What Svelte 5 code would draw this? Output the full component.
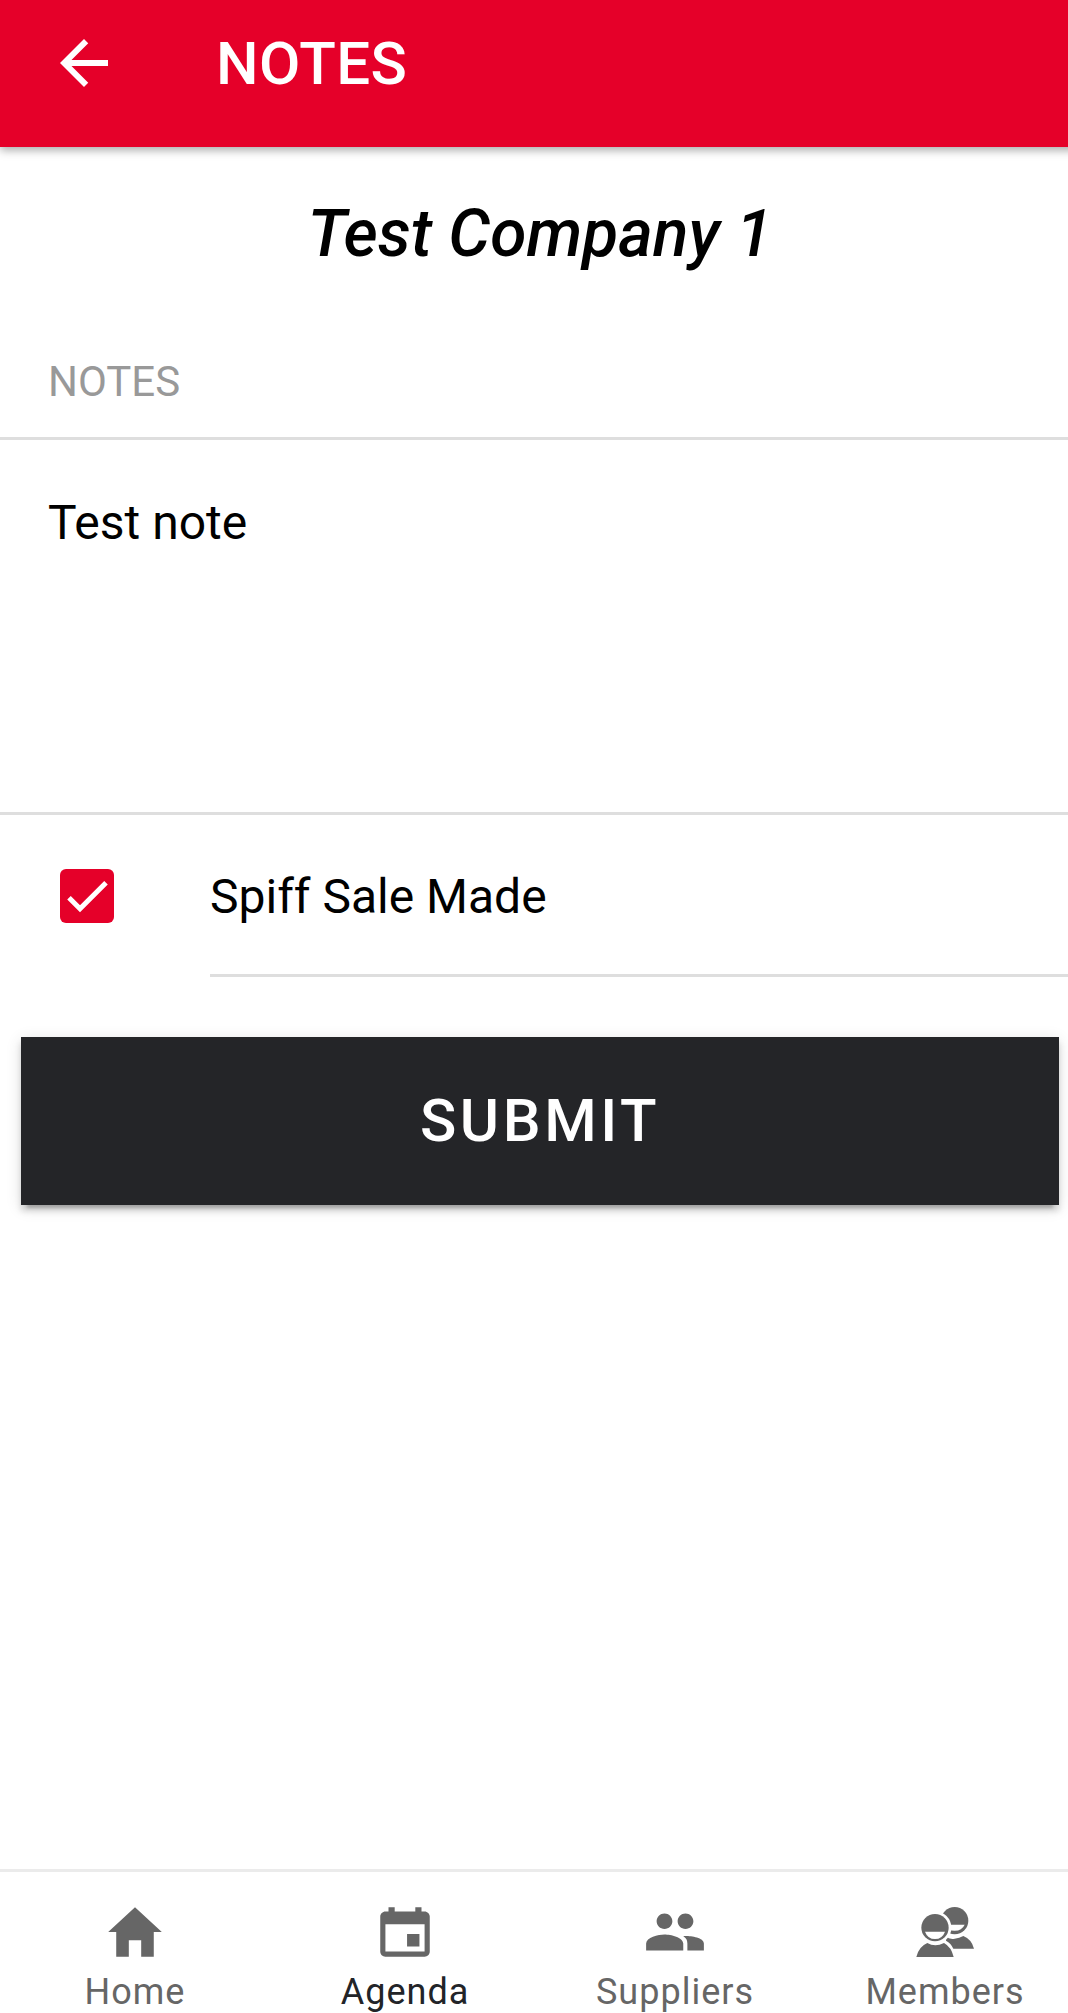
<script lang="ts">
	type Tab = { name: string; icon: string };

	const tabs: Tab[] = [
		{ name: 'Home', icon: 'home' },
		{ name: 'Agenda', icon: 'calendar' },
		{ name: 'Suppliers', icon: 'people' },
		{ name: 'Members', icon: 'members' }
	];

	const paths: Record<string, string> = {
		home: 'M208 448V320h96v128h97.6V256H464L256 64 48 256h62.4v192z',
		calendar:
			'M368 272h-96v96h96v-96zM336 64v32H176V64h-48v32h-24c-22 0-40 18-40 40v272c0 22 18 40 40 40h304c22 0 40-18 40-40V136c0-22-18-40-40-40h-24V64h-48zm72 344H104V196h304v212z',
		people:
			'M337.454 232c33.599 0 61.092-27.002 61.092-60 0-32.997-27.493-60-61.092-60s-61.09 27.003-61.09 60c0 32.998 27.491 60 61.09 60zm-162.908 0c33.599 0 61.09-27.002 61.09-60 0-32.997-27.491-60-61.09-60s-61.092 27.003-61.092 60c0 32.998 27.493 60 61.092 60zm0 44C126.688 276 32 298.998 32 346v54h288v-54c0-47.002-97.599-70-145.454-70zm162.908 11.003c-6.105 0-10.325 0-17.454.997 23.426 17.002 32 28 32 58v54h128v-54c0-47.002-94.688-58.997-142.546-58.997z'
	};

	let active = $state('Agenda');
	let note = $state('Test note');
	let spiffSale = $state(true);
</script>

<div class="page">
	<header>
		<button class="back" aria-label="Back">
			<svg viewBox="0 0 24 24" width="72" height="72">
				<path d="M20 11H7.83l5.59-5.59L12 4l-8 8 8 8 1.41-1.41L7.83 13H20v-2z" fill="#fff" />
			</svg>
		</button>
		<h1>NOTES</h1>
	</header>

	<main>
		<h2>Test Company 1</h2>
		<div class="list-header">NOTES</div>
		<textarea bind:value={note} aria-label="Notes" spellcheck="false"></textarea>

		<div class="item">
			<button
				class="checkbox"
				class:checked={spiffSale}
				role="checkbox"
				aria-checked={spiffSale}
				aria-label="Spiff Sale Made"
				onclick={() => (spiffSale = !spiffSale)}
			>
				{#if spiffSale}
					<svg viewBox="0 0 54 54" width="54" height="54">
						<path d="M9 28.8l11 11L46 13.8" fill="none" stroke="#fff" stroke-width="5" />
					</svg>
				{/if}
			</button>
			<div class="item-label">Spiff Sale Made</div>
		</div>

		<button class="submit">SUBMIT</button>
	</main>

	<nav>
		{#each tabs as tab (tab.name)}
			<button class="tab" class:active={active === tab.name} onclick={() => (active = tab.name)}>
				{#if tab.icon === 'members'}
					<svg viewBox="0 0 198 198" width="66" height="66">
						<circle cx="128" cy="65" r="41" />
						<path class="cut" d="M98 77h60q-8 18-30 18T98 77z" />
						<path d="M102 112q10 10 26 7 14-1 26-8 25 10 32 38h-62q-7-16-22-24z" />
						<circle class="cut" cx="69" cy="86" r="49" />
						<circle cx="69" cy="86" r="41" />
						<path class="cut" d="M39 98h60q-8 22-30 22T39 98z" />
						<path d="M46 132q23 14 50 0 22 12 29 42H13q7-31 33-42z" />
					</svg>
				{:else}
					<svg viewBox="0 0 512 512" width="66" height="66">
						<path d={paths[tab.icon]} />
					</svg>
				{/if}
				<span>{tab.name}</span>
			</button>
		{/each}
	</nav>
</div>

<style>
	:global(body) {
		background: #fff;
		margin: 0;
		overflow: hidden;
	}

	.page {
		color: #000;
		display: flex;
		flex-direction: column;
		font-family: Roboto, sans-serif;
		height: 2013px;
		overflow: hidden;
		width: 1080px;
	}

	button {
		background: none;
		border: none;
		border-radius: 0;
		font-family: inherit;
		margin: 0;
		padding: 0;
	}

	svg {
		display: block;
	}

	header {
		background: #e50029;
		box-sizing: border-box;
		box-shadow: 0 3px 9px rgba(0, 0, 0, 0.35);
		display: flex;
		flex: none;
		gap: 96px;
		height: 147px;
		padding: 27px 48px 0;
	}

	.back {
		height: 72px;
	}

	h1 {
		color: #fff;
		font-size: 60px;
		font-weight: 500;
		letter-spacing: 0.4px;
		line-height: 74px;
		margin: 0;
	}

	main {
		display: flex;
		flex: 1;
		flex-direction: column;
	}

	h2 {
		font-size: 66px;
		font-style: italic;
		font-weight: 500;
		line-height: 80px;
		margin: 47px 0 0;
		text-align: center;
	}

	.list-header {
		border-bottom: 3px solid #dedede;
		color: #999;
		font-size: 42px;
		line-height: 50px;
		margin-top: 83px;
		padding: 0 48px 30px;
	}

	textarea {
		background: none;
		border: none;
		border-bottom: 3px solid #dedede;
		border-radius: 0;
		box-sizing: border-box;
		color: #000;
		font: 48px/57px Roboto, sans-serif;
		height: 375px;
		outline: none;
		padding: 54px 48px 0;
		resize: none;
		width: 100%;
	}

	.item {
		align-items: center;
		display: flex;
		height: 162px;
		padding-left: 60px;
	}

	.checkbox {
		border: 6px solid #999;
		border-radius: 6px;
		box-sizing: border-box;
		height: 54px;
		width: 54px;
	}

	.checkbox.checked {
		background: #e50029;
		border: none;
	}

	.item-label {
		border-bottom: 3px solid #dedede;
		box-sizing: border-box;
		flex: 1;
		font-size: 48px;
		height: 162px;
		line-height: 164px;
		margin-left: 96px;
	}

	.submit {
		background: #242528;
		box-shadow:
			0 9px 3px -6px rgba(0, 0, 0, 0.2),
			0 6px 6px 0 rgba(0, 0, 0, 0.14),
			0 3px 15px 0 rgba(0, 0, 0, 0.12);
		color: #fff;
		font-size: 60px;
		font-weight: 500;
		height: 168px;
		letter-spacing: 3.6px;
		margin: 60px 21px 0;
		padding-bottom: 2px;
	}

	nav {
		border-top: 3px solid #ebebeb;
		box-sizing: border-box;
		display: flex;
		flex: none;
		height: 144px;
	}

	.tab {
		align-items: center;
		color: #666;
		display: flex;
		flex: 1;
		flex-direction: column;
		font-size: 36px;
		line-height: 42px;
		padding-top: 27px;
	}

	.tab svg {
		fill: #666;
	}

	.tab .cut {
		fill: #fff;
	}

	.tab span {
		letter-spacing: 1px;
		margin-top: 6px;
	}

	.tab.active {
		color: #222428;
	}
</style>
